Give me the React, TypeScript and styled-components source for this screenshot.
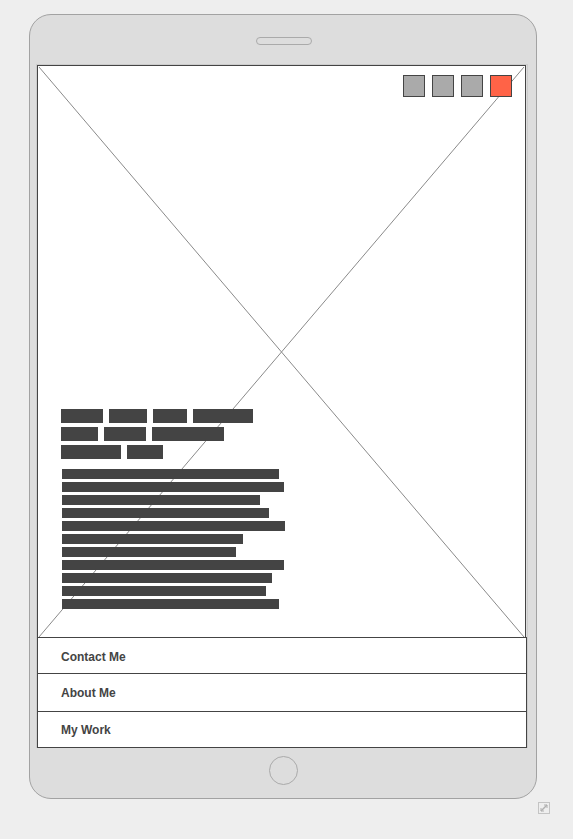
import React from "react";
import styled, { createGlobalStyle } from "styled-components";

const Global = createGlobalStyle`
  html, body { margin: 0; padding: 0; background: #eeeeee; }
  body { font-family: "Liberation Sans", Arial, sans-serif; }
`;

const Stage = styled.div`
  display: grid;
  grid-template-columns: 508px 11px;
  column-gap: 1px;
  padding: 14px 0 0 29px;
  width: max-content;
`;

const Device = styled.div`
  grid-column: 1;
  grid-row: 1;
  box-sizing: border-box;
  width: 508px;
  height: 785px;
  border: 1px solid #a2a2a2;
  border-radius: 22px;
  background: #dddddd;
  display: flex;
  flex-direction: column;
`;

const TopBezel = styled.div`
  height: 49px;
  display: flex;
  justify-content: center;
  padding-top: 22px;
  box-sizing: border-box;
`;

const Speaker = styled.div`
  box-sizing: border-box;
  width: 56px;
  height: 8px;
  border: 1px solid #aaaaaa;
  border-radius: 4px;
  margin-left: 2px;
`;

const Screen = styled.div`
  box-sizing: border-box;
  width: 492px;
  margin-left: 6px;
  border: 1px solid #cccccc;
  border-bottom: none;
  display: flex;
  flex-direction: column;
`;

const Hero = styled.div`
  position: relative;
  box-sizing: border-box;
  width: 489px;
  height: 572px;
  border: 1px solid #444444;
  border-bottom: none;
  background: #ffffff;
  display: flex;
  flex-direction: column;
  padding: 9px 13px 28px 23px;
`;

const Cross = styled.svg`
  position: absolute;
  inset: 0;
  width: 100%;
  height: 100%;
`;

const Controls = styled.div`
  position: relative;
  display: flex;
  justify-content: flex-end;
  gap: 7px;
`;

const Square = styled.div<{ $accent?: boolean }>`
  box-sizing: border-box;
  width: 22px;
  height: 22px;
  border: 1px solid #444444;
  background: ${(p) => (p.$accent ? "#ff6347" : "#aaaaaa")};
`;

const Spacer = styled.div`
  flex: 1;
`;

const TextBlock = styled.div`
  position: relative;
  display: flex;
  flex-direction: column;
`;

const Headline = styled.div`
  display: flex;
  flex-direction: column;
  gap: 4px;
`;

const WordRow = styled.div`
  display: flex;
  gap: 6px;
`;

const Word = styled.div<{ $w: number }>`
  width: ${(p) => p.$w}px;
  height: 14px;
  background: #444444;
`;

const Paragraph = styled.div`
  display: flex;
  flex-direction: column;
  gap: 3px;
  margin-top: 10px;
  padding-left: 1px;
`;

const Line = styled.div<{ $w: number }>`
  width: ${(p) => p.$w}px;
  height: 10px;
  background: #444444;
`;

const Nav = styled.div`
  box-sizing: border-box;
  width: 490px;
  border: 1px solid #444444;
  background: #ffffff;
  display: flex;
  flex-direction: column;
`;

const NavItem = styled.div<{ $h: number; $first?: boolean }>`
  box-sizing: border-box;
  height: ${(p) => p.$h}px;
  border-top: ${(p) => (p.$first ? "none" : "1px solid #444444")};
  display: flex;
  align-items: center;
  padding: ${(p) => (p.$first ? "2px" : "1px")} 0 0 23px;
  font-family: "Liberation Sans", Arial, sans-serif;
  font-weight: bold;
  font-size: 12px;
  color: #444444;
`;

const BottomBezel = styled.div`
  flex: 1;
  display: flex;
  justify-content: center;
  padding-top: 8px;
  box-sizing: border-box;
`;

const HomeButton = styled.div`
  box-sizing: border-box;
  width: 29px;
  height: 29px;
  border: 1px solid #aaaaaa;
  border-radius: 50%;
  margin-left: 1px;
`;

const ResizeHandle = styled.svg`
  grid-column: 2;
  grid-row: 2;
  margin-top: 3px;
  width: 12px;
  height: 12px;
`;

const headline = [
  [42, 38, 34, 60],
  [37, 42, 72],
  [60, 36],
];

const lines = [217, 222, 198, 207, 223, 181, 174, 222, 210, 204, 217];

const navItems: { label: string; h: number }[] = [
  { label: "Contact Me", h: 35 },
  { label: "About Me", h: 38 },
  { label: "My Work", h: 36 },
];

export default function App() {
  return (
    <>
      <Global />
      <Stage>
        <Device>
          <TopBezel>
            <Speaker />
          </TopBezel>
          <Screen>
            <Hero>
              <Cross viewBox="0 0 489 572" preserveAspectRatio="none">
                <line x1="1" y1="1" x2="488" y2="572" stroke="#8a8a8a" strokeWidth="1" />
                <line x1="488" y1="1" x2="1" y2="572" stroke="#8a8a8a" strokeWidth="1" />
              </Cross>
              <Controls>
                <Square />
                <Square />
                <Square />
                <Square $accent />
              </Controls>
              <Spacer />
              <TextBlock>
                <Headline>
                  {headline.map((row, i) => (
                    <WordRow key={i}>
                      {row.map((w, j) => (
                        <Word key={j} $w={w} />
                      ))}
                    </WordRow>
                  ))}
                </Headline>
                <Paragraph>
                  {lines.map((w, i) => (
                    <Line key={i} $w={w} />
                  ))}
                </Paragraph>
              </TextBlock>
            </Hero>
            <Nav>
              {navItems.map((n, i) => (
                <NavItem key={n.label} $h={n.h} $first={i === 0}>
                  {n.label}
                </NavItem>
              ))}
            </Nav>
          </Screen>
          <BottomBezel>
            <HomeButton />
          </BottomBezel>
        </Device>
        <ResizeHandle viewBox="0 0 12 12">
          <rect x="0.5" y="0.5" width="11" height="11" fill="none" stroke="#c4c4c4" />
          <line x1="3" y1="9" x2="9" y2="3" stroke="#b0b0b0" strokeWidth="1.4" />
          <path d="M6 3 H9 V6" fill="none" stroke="#b0b0b0" strokeWidth="1" />
          <path d="M3 6 V9 H6" fill="none" stroke="#b0b0b0" strokeWidth="1" />
        </ResizeHandle>
      </Stage>
    </>
  );
}
